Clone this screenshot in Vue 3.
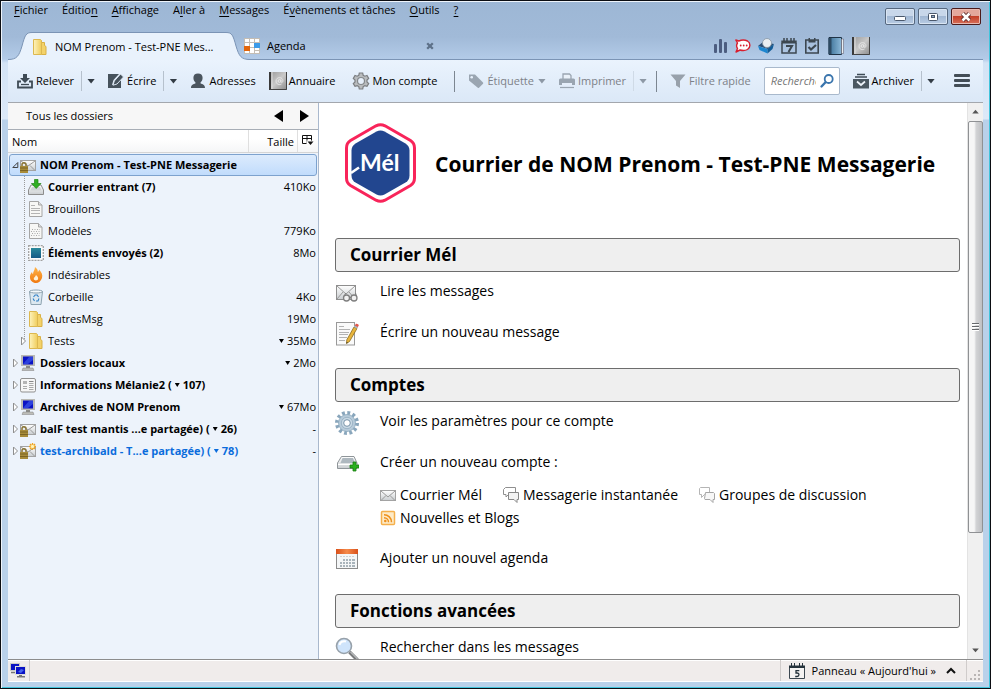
<script setup>
import { ref } from 'vue'

const menus = [
  ['', 'F', 'ichier'],
  ['Éditio', 'n', ''],
  ['', 'A', 'ffichage'],
  ['A', 'l', 'ler à'],
  ['', 'M', 'essages'],
  ['É', 'v', 'ènements et tâches'],
  ['', 'O', 'utils'],
  ['', '?', ''],
]

const quickIcons = [
  { icon: 'stats', label: 'Statistiques' },
  { icon: 'chat', label: 'Discussion' },
  { icon: 'box', label: 'Espace' },
  { icon: 'cal7', label: 'Agenda' },
  { icon: 'tasks', label: 'Tâches' },
  { icon: 'bluebook', label: 'Carnet' },
  { icon: 'book', label: 'Annuaire' },
]

const folders = [
  { name: 'NOM Prenom - Test-PNE Messagerie', icon: 'lockmail', level: 0, bold: true, twisty: 'open', size: '', selected: true },
  { name: 'Courrier entrant (7)', icon: 'inbox', level: 1, bold: true, size: '410Ko' },
  { name: 'Brouillons', icon: 'draft', level: 1, size: '' },
  { name: 'Modèles', icon: 'template', level: 1, size: '779Ko' },
  { name: 'Éléments envoyés (2)', icon: 'stamp', level: 1, bold: true, size: '8Mo' },
  { name: 'Indésirables', icon: 'fire', level: 1, size: '' },
  { name: 'Corbeille', icon: 'trash', level: 1, size: '4Ko' },
  { name: 'AutresMsg', icon: 'folder', level: 1, size: '19Mo' },
  { name: 'Tests', icon: 'folder', level: 1, twisty: 'closed', size: '35Mo', sum: true, last: true },
  { name: 'Dossiers locaux', icon: 'computer', level: 0, bold: true, twisty: 'closed', size: '2Mo', sum: true },
  { name: 'Informations Mélanie2', count: '107', icon: 'news', level: 0, bold: true, twisty: 'closed', size: '' },
  { name: 'Archives de NOM Prenom', icon: 'computer', level: 0, bold: true, twisty: 'closed', size: '67Mo', sum: true },
  { name: 'balF test mantis ...e partagée)', count: '26', icon: 'lockmail', level: 0, bold: true, twisty: 'closed', size: '-' },
  { name: 'test-archibald - T...e partagée)', count: '78', icon: 'lockmailnew', level: 0, bold: true, fresh: true, twisty: 'closed', size: '-' },
]

const accounts = [
  { icon: 'mail', label: 'Courrier Mél' },
  { icon: 'bubbles', label: 'Messagerie instantanée' },
  { icon: 'bubbleslight', label: 'Groupes de discussion' },
  { icon: 'rss', label: 'Nouvelles et Blogs' },
]

const query = ref('')
</script>

<template>
  <svg class="defs" aria-hidden="true">
    <defs>
      <linearGradient id="gFolder" x1="0" x2="1"><stop offset="0" stop-color="#fdf3bd" /><stop offset="1" stop-color="#f0cd5b" /></linearGradient>
      <linearGradient id="gTeal" x1="0" y1="0" x2="0" y2="1"><stop offset="0" stop-color="#2b8a9c" /><stop offset="1" stop-color="#155a86" /></linearGradient>
      <linearGradient id="gFire" x1="0" y1="0" x2="0" y2="1"><stop offset="0" stop-color="#ffb347" /><stop offset="1" stop-color="#f07a12" /></linearGradient>
      <linearGradient id="gGrey" x1="0" y1="0" x2="0" y2="1"><stop offset="0" stop-color="#ffffff" /><stop offset="1" stop-color="#c9cdd0" /></linearGradient>
      <linearGradient id="gBook" x1="0" x2="1"><stop offset="0" stop-color="#3c7096" /><stop offset="1" stop-color="#8bb8d8" /></linearGradient>
      <linearGradient id="gMetal" x1="0" y1="0" x2="1" y2="1"><stop offset="0" stop-color="#9a9a9a" /><stop offset="0.5" stop-color="#c8c8c8" /><stop offset="1" stop-color="#8a8a8a" /></linearGradient>
      <linearGradient id="gCal" x1="0" x2="1"><stop offset="0" stop-color="#d9501a" /><stop offset="0.5" stop-color="#f58a4a" /><stop offset="1" stop-color="#d9501a" /></linearGradient>
    </defs>

    <symbol id="i-folder" viewBox="0 0 16 16">
      <path d="M9.500 3.500h3v3l1.500 1v8H9.500z" fill="#f3d26a" stroke="#d9b145" />
      <path d="M1.500 0.500h7l1 1v14H1.500z" fill="url(#gFolder)" stroke="#dcb850" />
    </symbol>
    <symbol id="i-agenda" viewBox="0 0 16 16">
      <rect x="0" y="0" width="16" height="16" fill="#c4bdb4" />
      <g fill="#fff"><rect x="1" y="1" width="4" height="3" /><rect x="6" y="1" width="4" height="3" /><rect x="11" y="1" width="4" height="3" /><rect x="1" y="5" width="4" height="3" /><rect x="6" y="5" width="4" height="4" /><rect x="6" y="10" width="4" height="5" /><rect x="11" y="10" width="4" height="2" /><rect x="11" y="13" width="4" height="2" /><rect x="1" y="13" width="4" height="2" /></g>
      <rect x="0" y="8" width="6" height="5" fill="#e2660c" /><rect x="10" y="5" width="6" height="5" fill="#3d9be8" />
    </symbol>
    <symbol id="i-close" viewBox="0 0 8 8">
      <path d="M1.200 1.200l5.600 5.600M6.800 1.200l-5.600 5.600" stroke="#5d7189" stroke-width="2.300" />
    </symbol>

    <symbol id="i-stats" viewBox="0 0 16 16">
      <g fill="#4c5d80"><rect x="2" y="6" width="3" height="9" rx="1" /><rect x="7" y="1" width="3" height="14" rx="1" /><rect x="12" y="4" width="3" height="11" rx="1" /></g>
    </symbol>
    <symbol id="i-chat" viewBox="0 0 16 16">
      <path d="M0.800 2l3 1C6.500 1.800 10 1.800 12.500 3c3.200 1.800 3.200 6.500 0 8.500-2.500 1.300-5 1.200-7.500 0.500L1 14l1.500-3.500C1.200 8.500 1.500 6.500 2.500 5z" fill="#fff" stroke="#d81f2f" stroke-width="1.400" stroke-linejoin="round" />
      <g fill="#d81f2f"><circle cx="5.700" cy="7.500" r="0.900" /><circle cx="8.700" cy="7.500" r="0.900" /><circle cx="11.700" cy="7.500" r="0.900" /></g>
    </symbol>
    <symbol id="i-box" viewBox="0 0 16 16">
      <path d="M0 8l5-4 11 2-6 5z" fill="#2b4e74" /><path d="M0 8l9.500 3v4.500L1.500 12z" fill="#1d86cf" /><path d="M9.500 11L16 6l-1.500 5-5 4.500z" fill="#125c96" />
      <circle cx="9" cy="5" r="4.500" fill="#e9eef2" stroke="#8796a3" stroke-width="0.800" />
    </symbol>
    <symbol id="i-cal7" viewBox="0 0 16 16">
      <path d="M1 5v10h14V5" fill="none" stroke="#3c4750" stroke-width="1.500" />
      <path d="M0.300 2.500h15.400V5.500H0.300z" fill="#3c4750" /><path d="M3 0v4M6 0v4M10 0v4M13 0v4" stroke="#3c4750" stroke-width="1.500" />
      <path d="M5 8h6l-3.500 6" fill="none" stroke="#3c4750" stroke-width="2" />
    </symbol>
    <symbol id="i-cal5" viewBox="0 0 16 16">
      <path d="M0.500 4v11.500h15V4" fill="#f5f3f2" stroke="#3c4750" />
      <path d="M0 2.500h16V5H0z" fill="#26333c" /><path d="M2.500 0v4M5.500 0v4M10.500 0v4M13.500 0v4" stroke="#26333c" />
      <path d="M10.300 7.700H7V10H8c2.700 0 2.500 3.500 0 3.500H6.200" fill="none" stroke="#26333c" stroke-width="1.300" />
    </symbol>
    <symbol id="i-tasks" viewBox="0 0 16 16">
      <path d="M1.800 2h12.400v13H1.800z" fill="none" stroke="#3c4750" stroke-width="1.600" /><path d="M4.500 0h1.500v2h4V0h1.500v4.500h-7z" fill="#3c4750" />
      <path d="M4.500 9l2.500 2.500L12 7" fill="none" stroke="#3c4750" stroke-width="2.200" />
    </symbol>
    <symbol id="i-bluebook" viewBox="0 0 16 18">
      <path d="M1 0.500h12.500v17H1z" fill="url(#gBook)" stroke="#1f3346" /><path d="M0.500 1v16h3V1z" fill="#2d4a63" /><path d="M13.500 2h2v14.500h-2z" fill="#e8eef2" stroke="#667" stroke-width="0.600" />
    </symbol>
    <symbol id="i-book" viewBox="0 0 18 18">
      <rect width="18" height="18" fill="url(#gMetal)" /><path d="M0 0h2v18H0z" fill="#3a3a3a" /><path d="M3 0v18" stroke="#dedede" />
      <path d="M17.500 0v17.500H1" fill="none" stroke="#444" />
      <g fill="none" stroke="#e8e8e8" stroke-width="0.900"><circle cx="10.500" cy="9" r="1.400" /><path d="M12 7.500v2.300c0 1 2 0.800 2-0.800 0-4.500-7-4.500-7 0 0 3.500 3.500 4.300 5.500 3" /></g>
    </symbol>

    <symbol id="i-get" viewBox="0 0 16 16">
      <path d="M6 1h4v4h3L8 10 3 5h3z" fill="#3f4b55" /><path d="M4 8.500H1v6h14v-6h-3" fill="none" stroke="#3f4b55" stroke-width="1.800" /><path d="M4 11.500h8" stroke="#3f4b55" stroke-width="1.300" />
    </symbol>
    <symbol id="i-write" viewBox="0 0 16 16">
      <path d="M0 1h11L5.500 7 4 12l5-1.500L13 7v8H0z" fill="#46525c" /><path d="M12.500 1L15.500 4l-6.500 7-4 1.200L6.300 8z" fill="#46525c" stroke="#e4eefa" stroke-width="0.900" />
    </symbol>
    <symbol id="i-person" viewBox="0 0 16 16">
      <path d="M8 0.500c2.900 0 4.600 1.500 4.600 4.200 0 2-0.800 3.600-2 4.600v1.200c1.800 0.800 4.400 1 4.400 4.500H1c0-3.500 2.600-3.700 4.400-4.500V9.300c-1.200-1-2-2.600-2-4.600C3.400 2 5.100 0.500 8 0.500z" fill="#4b555e" />
    </symbol>
    <symbol id="i-gear" viewBox="0 0 18 18">
      <path d="M7.300 1h3.400l0.500 2.300 1.600 0.900 2.200-0.700 1.700 2.900-1.700 1.600v1.900l1.700 1.600-1.700 2.900-2.200-0.700-1.600 0.900-0.500 2.400H7.300l-0.500-2.400-1.600-0.900-2.200 0.700-1.700-2.900L3 9.900V8L1.300 6.400 3 3.500l2.200 0.700 1.600-0.900z" fill="#b9bcbe" stroke="#7b7e81" stroke-width="1.200" /><circle cx="9" cy="9" r="3.500" fill="#e6effa" stroke="#84888b" stroke-width="1.200" />
    </symbol>
    <symbol id="i-tag" viewBox="0 0 16 16">
      <path d="M1 1.500h6L15 9.500a1 1 0 0 1 0 1.200l-4 4a1 1 0 0 1-1.200 0L1 7.500z" fill="#9aa5b1" /><circle cx="3.700" cy="4.200" r="1.300" fill="#e8f1fc" />
    </symbol>
    <symbol id="i-print" viewBox="0 0 16 16">
      <path d="M4 6V1h6.500L12 2.500V6" fill="#eaf1f9" stroke="#9aa5b1" stroke-width="1.300" /><path d="M1.500 5.500h13c1 0 1.500 0.800 1.500 1.500v5H0V7c0-0.700 0.500-1.500 1.500-1.500z" fill="#9aa5b1" /><path d="M3 10h10v2.500H3z" fill="#e5eefa" /><path d="M1 14.500h14" stroke="#9aa5b1" stroke-width="1.200" />
    </symbol>
    <symbol id="i-filter" viewBox="0 0 16 16"><path d="M0.500 1.500h15L10 8v7l-4-2.500V8z" fill="#98a1ab" /></symbol>
    <symbol id="i-search" viewBox="0 0 16 16">
      <circle cx="9.700" cy="6" r="4" fill="none" stroke="#3a75ad" stroke-width="1.800" /><path d="M6.300 9.500L2.500 13.500" stroke="#3a75ad" stroke-width="2.400" stroke-linecap="round" />
    </symbol>
    <symbol id="i-archive" viewBox="0 0 16 16">
      <path d="M4 1.500h8M2 4h12" stroke="#3f4b55" stroke-width="1.300" /><path d="M0 6h16v9.500H0z" fill="#4b5862" /><path d="M4 8.500l4 3.500 4-3.500" fill="none" stroke="#eef4fb" stroke-width="1.700" />
    </symbol>
    <symbol id="i-menu" viewBox="0 0 16 14">
      <g fill="#434d56"><rect width="16" height="3" rx="1" /><rect y="5" width="16" height="3" rx="1" /><rect y="10" width="16" height="3" rx="1" /></g>
    </symbol>

    <symbol id="i-mail" viewBox="0 0 16 16">
      <rect x="0.500" y="3.500" width="15" height="10" fill="url(#gGrey)" stroke="#a3a3a3" /><path d="M1 4l7 6 7-6M1 13.500l5-5M15 13.500l-5-5" fill="none" stroke="#9a9a9a" />
    </symbol>
    <symbol id="i-lockmail" viewBox="0 0 16 16">
      <rect x="0.500" y="3.500" width="15" height="10" fill="url(#gGrey)" stroke="#a3a3a3" /><path d="M1 4l7 5 7-5M15 13.500l-5-5" fill="none" stroke="#9a9a9a" />
      <path d="M2 9V7.500C2 5 6 5 6 7.500V9" fill="none" stroke="#8b7635" stroke-width="1.500" /><rect x="0" y="9" width="8" height="7" fill="#a88c3a" /><path d="M0 11h8M0 13.500h8" stroke="#7b6424" />
    </symbol>
    <symbol id="i-lockmailnew" viewBox="0 0 16 16">
      <use href="#i-lockmail" /><g stroke="#f0a21c" stroke-width="1.300"><path d="M12.500 0v7M9 3.500h7M10 1l5 5M15 1l-5 5" /></g><circle cx="12.500" cy="3.500" r="1.700" fill="#fff3b5" />
    </symbol>
    <symbol id="i-inbox" viewBox="0 0 16 16">
      <path d="M3 6h10l2.500 5v4.500h-15V11z" fill="url(#gGrey)" stroke="#8d8d8d" /><path d="M4 8h8l1.500 3.500h-11z" fill="#cfd3d6" /><path d="M6.500 0.500h3.500v4h3L8.200 9.500 3.500 4.500h3z" fill="#2fae23" stroke="#1c8413" stroke-width="0.700" />
    </symbol>
    <symbol id="i-draft" viewBox="0 0 16 16">
      <path d="M1.500 0.500h9l3.500 3.500v11.500H1.500z" fill="#f7f7f5" stroke="#a5a5a5" /><path d="M10.500 0.500V4H14" fill="#ddd" stroke="#a5a5a5" /><path d="M3 4.500h4M3 7.500h9M3 9.500h9M3 12.500h9" stroke="#b4b4b4" />
    </symbol>
    <symbol id="i-template" viewBox="0 0 16 16">
      <path d="M1.500 0.500h9l3.500 3.500v11.500H1.500z" fill="#f7f7f5" stroke="#a5a5a5" /><path d="M10.500 0.500V4H14" fill="#ddd" stroke="#a5a5a5" /><path d="M4 6.500h8M3 8.500h9M4 10.500h8M3 12.500h9" stroke="#aaa" stroke-dasharray="1 1.500" />
    </symbol>
    <symbol id="i-stamp" viewBox="0 0 16 16">
      <rect x="0.700" y="0.700" width="14.600" height="14.600" fill="#fafafa" stroke="#a2a2a2" stroke-width="1.300" stroke-dasharray="2 1" /><rect x="3" y="3" width="10" height="10" fill="url(#gTeal)" />
    </symbol>
    <symbol id="i-fire" viewBox="0 0 16 16">
      <path d="M7 0c2 1.500 3 3 2.800 5 0.700-0.600 1.200-1.400 1.200-2.500C13.500 5 15 8 14 11c-1 3-3.500 5-6 5s-5.500-1.700-6-5c-0.400-2.500 0.700-4.500 2-6 0 1 0.300 1.700 1 2.200C5 4.500 7 3 7 0z" fill="url(#gFire)" />
      <path d="M8 8c1.500 1.200 2.500 2.600 2 4.300-0.400 1.400-3.600 1.600-4.200 0C5.300 10.500 7.500 9.800 8 8z" fill="#fff2d8" />
    </symbol>
    <symbol id="i-trash" viewBox="0 0 16 16">
      <path d="M1.500 2.500h13L13 15.500H3z" fill="#dce8f0" stroke="#8fa4b1" /><ellipse cx="8" cy="2.500" rx="6.500" ry="1.500" fill="#f5f9fb" stroke="#8fa4b1" /><path d="M5.500 8l1.700-2h2l1.300 2M11 9.500l-1 2.500H8M6.500 12L5 9.500" fill="none" stroke="#2f7fc4" stroke-width="1.100" />
    </symbol>
    <symbol id="i-computer" viewBox="0 0 16 16">
      <rect x="1" y="0" width="14" height="11" fill="#b9b9b4" /><rect x="3" y="1.500" width="10" height="8" fill="#0a12c4" /><path d="M3 9L9 2h4v3L8 9z" fill="#3b55e8" opacity=".7" /><path d="M6 11h4v2H6z" fill="#8c8c88" /><path d="M3 13h10l1 2.500H2z" fill="#bdbdb8" stroke="#808080" stroke-width="0.500" />
    </symbol>
    <symbol id="i-news" viewBox="0 0 16 16">
      <rect x="0.500" y="1.500" width="15" height="13.500" rx="1.500" fill="#f6f6f6" stroke="#909090" /><path d="M3 9.500h4M3 11.500h4M9 6.500h4.500M9 8.500h4.500M9 10.500h4.500M9 12.500h4.500" stroke="#aaa" /><rect x="3" y="4" width="4" height="3" fill="#b4b4b4" /><path d="M9 4.500h4.500" stroke="#888" />
    </symbol>
    <symbol id="i-network" viewBox="0 0 16 16">
      <rect width="10" height="8" fill="#c9c9c4" /><rect x="1" y="1" width="8" height="6" fill="#0a12c4" /><path d="M1 9.500h6" stroke="#777" stroke-width="1.500" /><rect x="5" y="3" width="11" height="9" fill="#dededa" /><rect x="6" y="4" width="9" height="7" fill="#0a12c4" /><path d="M8 9l3-3 3 1-3 3z" fill="#4866f0" /><path d="M9 12h3v1.500H9zM7 13h8v1.500H7z" fill="#777" />
    </symbol>
    <symbol id="i-columns" viewBox="0 0 12 12">
      <path d="M0.500 0.500h9v8h-9zM0.500 3.500h9M5 0.500v8" fill="#fff" stroke="#111" /><path d="M4.500 5.500h7.500V12H4.500z" fill="#fbfbfb" /><path d="M5.500 6.500h6L8.500 10z" fill="#111" />
    </symbol>

    <symbol id="i-read" viewBox="0 0 24 24">
      <rect x="1.500" y="4.500" width="19" height="14" fill="url(#gGrey)" stroke="#8e8e8e" /><path d="M2 5l9 8 9-8M2 18l6-7M20 18l-6-7" fill="none" stroke="#9a9a9a" />
      <circle cx="11.500" cy="17" r="3" fill="#f1f1f1" stroke="#7f7f7f" stroke-width="1.300" /><circle cx="19" cy="17" r="3" fill="#f1f1f1" stroke="#7f7f7f" stroke-width="1.300" /><path d="M14.500 16.500h1.500M9 15l2-3M21.500 15l-1-3" stroke="#7f7f7f" />
    </symbol>
    <symbol id="i-compose" viewBox="0 0 24 24">
      <rect x="1.500" y="0.500" width="18" height="22.500" fill="#fafafa" stroke="#999" /><path d="M4 4.500h5M4 7.500h11M4 10.500h10M4 12.500h9M4 15.500h8M4 18.500h6" stroke="#b3b3b3" />
      <path d="M19 5l3 1.500-7.500 13-3 2 0.300-3.700z" fill="#e8b53c" stroke="#8a6a1c" stroke-width="0.800" /><path d="M19.500 4.200l1.200-2.200c0.600-1 3.700 0.300 3 1.600l-1.200 2.200z" fill="#e2574c" /><path d="M18.800 5l1-1.500 3 1.500-1 1.500z" fill="#a9b4bc" /><path d="M11.500 21.500l0.200-1.600 1.200 0.800z" fill="#222" />
    </symbol>
    <symbol id="i-biggear" viewBox="0 0 24 24">
      <circle cx="12" cy="12" r="10" fill="none" stroke="#89a6bc" stroke-width="4" stroke-dasharray="2.800 2.436" /><circle cx="12" cy="12" r="8.500" fill="#b7cbda" stroke="#8ba8bd" stroke-width="0.800" /><circle cx="12" cy="12" r="5.700" fill="#c9d9e4" stroke="#9db5c7" /><circle cx="12" cy="12" r="3.300" fill="#fff" stroke="#7794aa" />
    </symbol>
    <symbol id="i-newaccount" viewBox="0 0 24 24">
      <path d="M6.500 4.500h12.500l3 6.500v5.500H2.500v-5.500z" fill="url(#gGrey)" stroke="#8f9599" /><path d="M7.500 6h10.500l2 5H5.500z" fill="#aeb8bf" /><path d="M3 12.500h19" stroke="#fff" /><path d="M18 10h3v3h3v3H21v3h-3v-3h-3v-3h3z" fill="#2bb01f" stroke="#1b7d12" stroke-width="0.800" />
    </symbol>
    <symbol id="i-calendar" viewBox="0 0 24 24">
      <rect x="1.500" y="1.500" width="21" height="19" fill="#f4f6f7" stroke="#8b8b8b" /><rect x="1" y="1" width="22" height="5" fill="url(#gCal)" /><path d="M5 8.500h14" stroke="#cfd2d4" stroke-dasharray="2 1" /><rect x="5" y="11" width="15" height="8" fill="#a9b4bb" />
      <g stroke="#f4f6f7"><path d="M4 13.500h16M4 16.500h16M7.500 11v8M10.500 11v8M13.500 11v8M16.500 11v8" /></g><rect x="4" y="10" width="4" height="3" fill="#f4f6f7" />
    </symbol>
    <symbol id="i-magnify" viewBox="0 0 24 24">
      <path d="M14.500 15l8 8" stroke="#77797b" stroke-width="3.500" /><path d="M15.500 15l7 7" stroke="#b8babb" stroke-width="1.200" /><circle cx="9" cy="9" r="7.500" fill="#cfe4fb" stroke="#97a1aa" stroke-width="1.600" /><path d="M4.500 8C5 5 8 3.500 11 4.500" stroke="#fff" stroke-width="2" fill="none" />
    </symbol>
    <symbol id="i-bubbles" viewBox="0 0 16 16">
      <path d="M2.500 0.500h10v7h-7L3 10V7.500H0.500V2.500z" fill="#fff" stroke="#8f8f8f" /><path d="M5.500 5.500h10v7h-1.500v3l-3-3h-5.500z" fill="#f3f3f3" stroke="#888" />
    </symbol>
    <symbol id="i-bubbleslight" viewBox="0 0 16 16">
      <path d="M1.500 0.500h9v7h-5L2.500 10.500V7.500H0.500v-6z" fill="#fff" stroke="#b5b5b5" /><path d="M6.500 5.500h8l1 1v6h-1.500v3l-3-3H6l-0.500-1z" fill="#f7f7f7" stroke="#a5a5a5" />
    </symbol>
    <symbol id="i-rss" viewBox="0 0 16 16">
      <rect x="1.500" y="1.500" width="13" height="13" rx="1" fill="#fdebc8" stroke="#f5b04c" stroke-width="1.500" /><circle cx="5.300" cy="11" r="1.300" fill="#ee8f1b" /><path d="M4 7.700a4.500 4.500 0 0 1 4.500 4.500M4 4.700a7.500 7.500 0 0 1 7.500 7.500" fill="none" stroke="#ee8f1b" stroke-width="1.500" />
    </symbol>
  </svg>

  <div class="window">
    <header class="chrome">
      <div class="top">
        <nav class="menubar">
          <a v-for="(m, i) in menus" :key="i" href="#">{{ m[0] }}<u>{{ m[1] }}</u>{{ m[2] }}</a>
        </nav>
        <div class="winbtns">
          <button type="button" aria-label="Réduire"><svg viewBox="0 0 14 12"><rect x="1.500" y="5.500" width="11" height="4" rx="1" fill="#fff" stroke="#4a586c" /></svg></button>
          <button type="button" aria-label="Agrandir"><svg viewBox="0 0 14 12"><rect x="2.500" y="2.500" width="9" height="7" rx="1" fill="#fff" stroke="#4a586c" /><rect x="5.500" y="4.500" width="3" height="2" fill="#8fa5c2" stroke="#4a586c" /></svg></button>
          <button type="button" class="quit" aria-label="Fermer"><svg viewBox="0 0 14 12"><path d="M3.500 2.500l7 7M10.500 2.500l-7 7" stroke="#5b2a2a" stroke-width="4.400" /><path d="M3.500 2.500l7 7M10.500 2.500l-7 7" stroke="#fff" stroke-width="2.600" /></svg></button>
        </div>
      </div>
      <div class="tabs">
        <div class="tab active">
          <svg class="curve" viewBox="0 0 24 29"><path d="M0 29V28.500C9 28.500 11 25 14 15 17 4 18 1.500 24 1.500V29z" fill="#e9f2fc" /><path d="M0 28.500C9 28.500 11 25 14 15 17 4 18 1.500 24 1.500" fill="none" stroke="#7b94b5" /></svg>
          <a href="#" class="tabface"><svg class="ic"><use href="#i-folder" /></svg><span>NOM Prenom - Test-PNE Mes...</span></a>
          <svg class="curve" viewBox="0 0 24 29"><path d="M0 1.500C6 1.500 7 4 10 15 13 25 15 28.500 24 28.500V29H0z" fill="#e9f2fc" /><path d="M0 1.500C6 1.500 7 4 10 15 13 25 15 28.500 24 28.500" fill="none" stroke="#7b94b5" /></svg>
        </div>
        <div class="tab idle">
          <a href="#"><svg class="ic"><use href="#i-agenda" /></svg><span>Agenda</span></a>
          <button type="button" aria-label="Fermer l'onglet"><svg><use href="#i-close" /></svg></button>
        </div>
        <div class="quick">
          <button v-for="q in quickIcons" :key="q.icon" type="button" :aria-label="q.label"><svg :class="{ tall: q.icon.endsWith('book') }"><use :href="'#i-' + q.icon" /></svg></button>
        </div>
      </div>
    </header>

    <div class="toolbar" role="toolbar">
      <div class="split">
        <button type="button"><svg class="ic"><use href="#i-get" /></svg>Relever</button>
        <button type="button" class="drop" aria-label="Options de relève"><i></i></button>
      </div>
      <div class="split">
        <button type="button"><svg class="ic"><use href="#i-write" /></svg>Écrire</button>
        <button type="button" class="drop" aria-label="Options d'écriture"><i></i></button>
      </div>
      <button type="button"><svg class="ic"><use href="#i-person" /></svg>Adresses</button>
      <button type="button" class="tight"><svg class="ic big"><use href="#i-book" /></svg>Annuaire</button>
      <button type="button" class="tight"><svg class="ic big"><use href="#i-gear" /></svg>Mon compte</button>
      <span class="vsep"></span>
      <button type="button" class="off"><svg class="ic"><use href="#i-tag" /></svg>Étiquette<i></i></button>
      <div class="split off">
        <button type="button"><svg class="ic"><use href="#i-print" /></svg>Imprimer</button>
        <button type="button" class="drop" aria-label="Options d'impression"><i></i></button>
      </div>
      <span class="vsep"></span>
      <button type="button" class="off"><svg class="ic"><use href="#i-filter" /></svg>Filtre rapide</button>
      <label class="search"><input v-model="query" type="text" placeholder="Rechercher" aria-label="Rechercher"><svg class="ic"><use href="#i-search" /></svg></label>
      <div class="split">
        <button type="button"><svg class="ic"><use href="#i-archive" /></svg>Archiver</button>
        <button type="button" class="drop" aria-label="Options d'archivage"><i></i></button>
      </div>
      <button type="button" class="burger" aria-label="Menu"><svg><use href="#i-menu" /></svg></button>
    </div>

    <div class="body">
      <aside class="side">
        <div class="sidehead">
          <span>Tous les dossiers</span>
          <button type="button" aria-label="Précédent"><svg viewBox="0 0 10 12"><path d="M9 0v12L0 6z" /></svg></button>
          <button type="button" aria-label="Suivant"><svg viewBox="0 0 10 12"><path d="M1 0v12l9-6z" /></svg></button>
        </div>
        <table class="tree">
          <thead>
            <tr>
              <th class="cname">Nom</th>
              <th class="csize">Taille</th>
              <th class="cpick"><button type="button" aria-label="Colonnes"><svg><use href="#i-columns" /></svg></button></th>
            </tr>
          </thead>
          <tbody>
            <tr v-for="f in folders" :key="f.name" :class="{ selected: f.selected, bold: f.bold, fresh: f.fresh, child: f.level, last: f.last }">
              <td class="fname">
                <span class="twisty">
                  <svg v-if="f.twisty === 'open'" viewBox="0 0 7 10"><path d="M0.800 7.500h5v-5z" fill="none" stroke="#444" /></svg>
                  <svg v-else-if="f.twisty" viewBox="0 0 7 10"><path d="M1.500 1v8L5.500 5z" fill="#fff" stroke="#8f8f8f" /></svg>
                </span>
                <svg class="ic"><use :href="'#i-' + f.icon" /></svg>
                <span>{{ f.name }}<template v-if="f.count"> (<i class="mark"></i>{{ f.count }})</template></span>
              </td>
              <td class="fsize"><i v-if="f.sum" class="mark"></i>{{ f.size }}</td>
            </tr>
          </tbody>
        </table>
      </aside>

      <main class="page">
        <div class="hero">
          <svg class="logo" viewBox="0 0 71 80">
            <path d="M31 2.800Q35.500 0.500 40 2.800L65.500 17.500Q69.500 20 69.500 25V55Q69.500 60 65.500 62.500L40 77.200Q35.500 79.500 31 77.200L5.500 62.500Q1.500 60 1.500 55V25Q1.500 20 5.500 17.500z" fill="#fff" stroke="#f8245a" stroke-width="3" />
            <path d="M31.500 8.500Q35.500 6.500 39.500 8.500L60.500 20.500Q64.500 23 64.500 27.500V52.500Q64.500 57 60.500 59.500L39.500 71.500Q35.500 73.500 31.500 71.500L10.500 59.500Q6.500 57 6.500 52.500V27.500Q6.500 23 10.500 20.500z" fill="#22468f" />
            <path d="M6 50l8-5.500" stroke="#fff" stroke-width="2.600" />
            <text x="15" y="48" font-size="23" font-family="Lato, sans-serif" font-weight="700" fill="#fff">Mél</text>
          </svg>
          <h1>Courrier de NOM Prenom - Test-PNE Messagerie</h1>
        </div>

        <section>
          <h2>Courrier Mél</h2>
          <a href="#" class="line"><svg><use href="#i-read" /></svg><span>Lire les messages</span></a>
          <a href="#" class="line"><svg><use href="#i-compose" /></svg><span>Écrire un nouveau message</span></a>
        </section>
        <section>
          <h2>Comptes</h2>
          <a href="#" class="line"><svg><use href="#i-biggear" /></svg><span>Voir les paramètres pour ce compte</span></a>
          <div class="line"><svg><use href="#i-newaccount" /></svg><span>Créer un nouveau compte :</span></div>
          <div class="accounts">
            <a v-for="a in accounts" :key="a.icon" href="#"><svg class="ic"><use :href="'#i-' + a.icon" /></svg>{{ a.label }}</a>
          </div>
          <a href="#" class="line"><svg><use href="#i-calendar" /></svg><span>Ajouter un nouvel agenda</span></a>
        </section>
        <section>
          <h2>Fonctions avancées</h2>
          <a href="#" class="line"><svg><use href="#i-magnify" /></svg><span>Rechercher dans les messages</span></a>
        </section>
      </main>

      <div class="scroll" aria-hidden="true">
        <svg viewBox="0 0 16 18"><path d="M4.500 10.500h7L8 6.500z" fill="#555" /></svg>
        <div class="thumb"><span></span></div>
        <div class="rest"></div>
        <svg viewBox="0 0 16 18"><path d="M4.500 7.500h7L8 11.500z" fill="#555" /></svg>
      </div>
    </div>

    <footer class="status">
      <span class="net"><svg class="ic"><use href="#i-network" /></svg></span>
      <button type="button" class="today"><svg class="ic"><use href="#i-cal5" /></svg>Panneau « Aujourd'hui »<svg class="up" viewBox="0 0 10 7"><path d="M1 6l4-4 4 4" fill="none" stroke="#111" stroke-width="2" /></svg></button>
      <svg class="grip" viewBox="0 0 12 12"><path d="M9 2h2M9 6h2M9 10h2M5 6h2M5 10h2M1 10h2" stroke="#b9b5b4" stroke-width="2" /></svg>
    </footer>
  </div>
</template>

<style>
body {
  background: #b9d1ea;
  overflow: hidden;
}
</style>

<style scoped>
* {
  box-sizing: border-box;
}
.defs {
  display: block;
  width: 0;
  height: 0;
}
.window {
  display: flex;
  flex-direction: column;
  height: 100vh;
  padding: 0 7px 6px;
  border: 1px solid #0b0d12;
  box-shadow: inset 1px 1px 0 #eef4fb, inset -1px -1px 0 #41c4dc;
  background: linear-gradient(#9db7d5 0, #a1bad8 36px, #b3cbe8 58px, #d3e3f5 62px, #dce9f8 118px, #b9d1ea 119px);
  font: 11px/16px "Open Sans", "Noto Sans", sans-serif;
  color: #000;
}
a {
  color: inherit;
  text-decoration: none;
}
button {
  display: flex;
  align-items: center;
  padding: 0;
  border: 0;
  background: none;
  font: inherit;
  color: inherit;
  white-space: nowrap;
}
.ic {
  flex: none;
  width: 16px;
  height: 16px;
}
.ic.big {
  width: 18px;
  height: 18px;
}

.top {
  display: flex;
  justify-content: space-between;
  height: 30px;
  padding: 0 2px 0 6px;
}
.menubar {
  display: flex;
  gap: 14px;
  padding-top: 1px;
  white-space: nowrap;
}
.menubar u {
  text-underline-offset: 2px;
}
.winbtns {
  display: flex;
  gap: 3px;
  padding-top: 7px;
}
.winbtns button {
  justify-content: center;
  width: 30px;
  height: 17px;
  border: 1px solid #56687f;
  border-radius: 2px;
  background: linear-gradient(#c8d7ea 45%, #a2b8d4 50%, #b8cce4);
  box-shadow: inset 0 0 0 1px #d9e5f3;
}
.winbtns .quit {
  background: linear-gradient(#e3a79c 45%, #c3402a 50%, #d8705a);
  border-color: #4b1a1a;
  box-shadow: inset 0 0 0 1px #e9b9b0;
}
.winbtns svg {
  width: 14px;
  height: 12px;
}

.tabs {
  display: flex;
  height: 29px;
  background: linear-gradient(#7b94b5, #7b94b5) bottom / 100% 1px no-repeat;
}
.tab {
  display: flex;
}
.curve {
  flex: none;
  width: 24px;
  height: 29px;
}
.tabface {
  display: flex;
  align-items: center;
  gap: 7px;
  width: 194px;
  background: #e9f2fc;
  border-top: 1px solid #7b94b5;
  margin-top: 1px;
  white-space: nowrap;
}
.idle {
  align-items: center;
  justify-content: space-between;
  flex: 0 0 193px;
  margin-left: -9px;
}
.idle a {
  display: flex;
  align-items: center;
  gap: 7px;
  padding-left: 3px;
}
.idle svg:not(.ic) {
  width: 8px;
  height: 8px;
}
.quick {
  display: flex;
  align-items: center;
  gap: 7px;
  margin-left: auto;
  padding-right: 113px;
}
.quick svg {
  width: 16px;
  height: 16px;
}
.quick svg.tall {
  width: 18px;
  height: 18px;
}

.toolbar {
  display: flex;
  align-items: center;
  gap: 13px;
  height: 43px;
  padding: 0 13px 0 9px;
  background: linear-gradient(#eaf3fd, #dbe8f7);
  border-bottom: 1px solid #a3a7ad;
}
.toolbar button {
  gap: 3px;
}
.toolbar .tight {
  gap: 2px;
  padding-right: 4px;
}
.split {
  display: flex;
  gap: 7px;
}
.toolbar .drop {
  height: 20px;
  padding-left: 4px;
  border-left: 1px solid #b6c1cd;
}
.toolbar i {
  width: 8px;
  height: 5px;
  margin-left: 1px;
  background: #333c45;
  clip-path: polygon(0 0, 100% 0, 50% 100%);
}
.toolbar .off {
  color: #7d8188;
}
.toolbar .off i {
  background: #8d98a5;
}
.toolbar .off .drop {
  border-color: #cfdae6;
}
.vsep {
  width: 1px;
  height: 21px;
  background: #7c8691;
}
.off + .vsep {
  margin-left: -4px;
}
.search {
  display: flex;
  align-items: center;
  gap: 3px;
  width: 78px;
  height: 28px;
  margin-left: auto;
  padding: 0 4px 0 6px;
  border: 1px solid #a9b9cc;
  border-radius: 2px;
  background: #fff;
}
.search input {
  flex: 1;
  width: 0;
  padding: 0;
  border: 0;
  outline: 0;
  font: inherit;
}
.search input::placeholder {
  color: #777;
  font-style: italic;
}
.burger {
  margin-left: 6px;
}
.burger svg {
  width: 16px;
  height: 14px;
}

.body {
  display: flex;
  flex: 1;
  min-height: 0;
  background: #fff;
}
.side {
  flex: 0 0 311px;
  border-right: 1px solid #a9b8cd;
  background: #edf3fb;
}
.sidehead {
  display: flex;
  align-items: center;
  gap: 15px;
  height: 27px;
  padding: 0 9px 0 18px;
  background: #f7f7f7;
  border-bottom: 1px solid #a8aeb6;
}
.sidehead span {
  flex: 1;
}
.sidehead svg {
  width: 10px;
  height: 12px;
}
.tree,
.tree thead,
.tree tbody {
  display: block;
}
.tree tr {
  display: flex;
  align-items: center;
  height: 22px;
}
.tree td,
.tree th {
  padding: 0;
  font-weight: inherit;
  text-align: left;
}
.tree thead tr {
  align-items: stretch;
  height: 23px;
  background: linear-gradient(#fff 40%, #f5f6f7);
  border-bottom: 1px solid #d5d5d5;
  line-height: 24px;
}
.tree .cname {
  flex: 1;
  padding-left: 4px;
}
.tree .csize {
  width: 50px;
  padding-right: 3px;
  border-left: 1px solid #dfdfdf;
  border-right: 1px solid #dfdfdf;
  text-align: right;
}
.cpick button {
  width: 20px;
  height: 22px;
  justify-content: center;
}
.cpick svg {
  width: 12px;
  height: 12px;
}
.tree tbody {
  padding: 1px 1px;
}
.tree tbody tr {
  padding: 0 1px 0 3px;
}
.tree .selected {
  padding: 0 0 0 2px;
  border: 1px solid #7da2ce;
  border-radius: 3px;
  background: linear-gradient(#dcebfd, #c1dcfc);
}
.fname {
  display: flex;
  align-items: center;
  flex: 1;
  align-self: stretch;
  gap: 4px;
  white-space: nowrap;
}
.twisty {
  display: flex;
  align-items: center;
  width: 7px;
  height: 22px;
}
.twisty svg {
  width: 7px;
  height: 10px;
}
.fname .ic {
  margin-left: -3px;
}
.child .fname {
  padding-left: 8px;
}
.child .twisty {
  background: repeating-linear-gradient(#9a9a9a 0 1px, transparent 1px 2px) 4px 0 / 1px 100% no-repeat;
}
.last .twisty {
  background-size: 1px 50%;
}
.bold .fname {
  font-weight: 700;
}
.fresh .fname {
  color: #0a6cdc;
}
.mark {
  display: inline-block;
  width: 5px;
  height: 4px;
  margin: 0 3px 2px 3px;
  background: currentColor;
  clip-path: polygon(0 0, 100% 0, 50% 100%);
}

.page {
  flex: 1;
  min-width: 0;
  padding: 20px 7px 0 16px;
  overflow: hidden;
  font-size: 14px;
  line-height: 23px;
}
.hero {
  display: flex;
  align-items: center;
  gap: 19px;
  padding: 0 0 35px 10px;
}
.logo {
  flex: none;
  width: 71px;
  height: 80px;
}
h1 {
  margin: 0;
  padding-top: 2px;
  font-size: 21px;
  line-height: 30px;
  font-weight: 700;
  white-space: nowrap;
}
section {
  padding-bottom: 14px;
}
h2 {
  margin: 0;
  padding: 0 14px;
  border: 1px solid #6d6d6d;
  border-radius: 3px;
  background: #efefef;
  font-size: 17px;
  line-height: 32px;
}
.line {
  display: flex;
  align-items: center;
  gap: 21px;
  height: 41px;
}
.line svg {
  width: 24px;
  height: 24px;
}
.line span {
  padding-bottom: 5px;
}
.accounts {
  display: flex;
  flex-wrap: wrap;
  column-gap: 21px;
  margin-top: -1px;
  padding: 0 60px 10px 45px;
}
.accounts a {
  display: flex;
  align-items: center;
  gap: 4px;
}

.scroll {
  display: flex;
  flex-direction: column;
  flex: 0 0 16px;
  border-left: 1px solid #e3e3e3;
  background: #f0f0f0;
}
.scroll svg {
  flex: none;
  width: 15px;
  height: 18px;
}
.thumb {
  display: flex;
  align-items: center;
  justify-content: center;
  flex: 411;
  border: 1px solid #8f9194;
  border-radius: 2px;
  background: linear-gradient(90deg, #f6f6f6 40%, #d2d3d5 55%, #bfc0c3);
}
.thumb span {
  width: 7px;
  height: 8px;
  background: repeating-linear-gradient(#66696c 0 1px, #fff 1px 2px, transparent 2px 3px);
}
.rest {
  flex: 108;
}

.status {
  display: flex;
  align-items: stretch;
  height: 23px;
  border-top: 1px solid #8c8c8c;
  border-bottom: 1px solid #fff;
  background: #f0eceb;
  box-shadow: inset 0 1px 0 #fff;
}
.net {
  display: flex;
  align-items: center;
  padding: 0 3px 0 2px;
  border-right: 1px solid #d0cccb;
}
.today {
  gap: 7px;
  margin-left: auto;
  padding: 0 10px 0 8px;
  border-left: 1px solid #d0cccb;
  border-right: 1px solid #d0cccb;
}
.up {
  width: 10px;
  height: 7px;
  margin-left: 3px;
}
.grip {
  align-self: flex-end;
  width: 12px;
  height: 12px;
  margin: 0 2px;
}
</style>
